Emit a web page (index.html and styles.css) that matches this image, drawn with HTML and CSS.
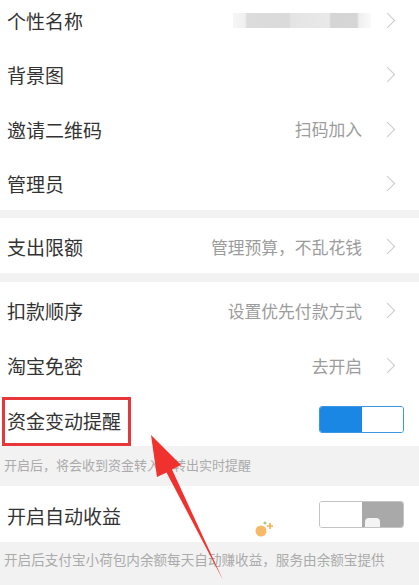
FILE: index.html
```html
<!DOCTYPE html>
<html lang="zh-CN">
  <head>
    <meta charset="UTF-8" />
    <meta name="viewport" content="width=device-width, initial-scale=1.0" />
    <title>小荷包设置</title>
    <link rel="stylesheet" href="styles.css">
  </head>
  <body>
    <div class="page">
      <div class="group group-top">
        <div class="row">
          <span class="label">个性名称</span>
          <span class="blurred"></span>
          <span class="chevron"></span>
        </div>
        <div class="row">
          <span class="label">背景图</span>
          <span class="chevron"></span>
        </div>
        <div class="row">
          <span class="label">邀请二维码</span>
          <span class="value">扫码加入</span>
          <span class="chevron"></span>
        </div>
        <div class="row">
          <span class="label">管理员</span>
          <span class="chevron"></span>
        </div>
      </div>

      <div class="group">
        <div class="row row-tall">
          <span class="label">支出限额</span>
          <span class="value">管理预算，不乱花钱</span>
          <span class="chevron"></span>
        </div>
      </div>

      <div class="group group-last">
        <div class="row row-tall">
          <span class="label">扣款顺序</span>
          <span class="value">设置优先付款方式</span>
          <span class="chevron"></span>
        </div>
        <div class="row row-tall">
          <span class="label">淘宝免密</span>
          <span class="value">去开启</span>
          <span class="chevron"></span>
        </div>
        <div class="row row-tall row-marked">
          <span class="label">资金变动提醒</span>
          <span class="toggle toggle-on">
            <span class="toggle-part"></span>
            <span class="toggle-part"></span>
          </span>
          <span class="highlight"></span>
        </div>
      </div>
      <div class="note">开启后，将会收到资金转入、转出实时提醒</div>

      <div class="group group-last">
        <div class="row row-income">
          <span class="label">开启自动收益</span>
          <span class="toggle toggle-off">
            <span class="toggle-part"></span>
            <span class="toggle-part"><span class="ghost"></span></span>
          </span>
        </div>
      </div>
      <div class="note note-long">开启后支付宝小荷包内余额每天自动赚收益，服务由余额宝提供</div>
    </div>

    <svg class="overlay" width="419" height="585" viewBox="0 0 419 585">
      <polygon fill="#f0322f" points="151,435 181,465 172,469.5 223,580 166.5,472.5 157,477" />
      <circle cx="261" cy="531" r="5.5" fill="#f6b968" />
      <circle cx="265" cy="523" r="1.6" fill="#9fd38c" />
      <path d="M270 523v6M267 526h6" stroke="#f5b04a" stroke-width="1.6" />
    </svg>
  </body>
</html>
```

FILE: styles.css
```css
body {
  margin: 0;
  background-color: #f2f2f2;
  font-family: "Noto Sans CJK SC", "Noto Sans", sans-serif;
  overflow: hidden;
  position: relative;
  width: 419px;
  height: 585px;
}

.page {
  display: flex;
  flex-direction: column;
}

.group {
  background: #fff;
  margin-bottom: 9px;
}

.group-top {
  margin-top: -8px;
  margin-bottom: 8px;
}

.group-last {
  margin-bottom: 0;
}

.row {
  display: flex;
  align-items: center;
  height: 54.5px;
  padding: 0 26px 0 7px;
  position: relative;
}

.row-tall {
  height: 55px;
}

.row-marked {
  height: 54px;
  padding-right: 15px;
}

.row-income {
  height: 56px;
  padding-right: 15px;
}

.label {
  flex: 1;
  font-size: 19px;
  color: #333;
  padding-top: 2px;
}

.value {
  font-size: 16.8px;
  color: #9c9c9c;
  margin-right: 20px;
  padding-top: 2px;
}

.chevron {
  width: 10px;
  height: 10px;
  border-top: 1.3px solid #c9c9c9;
  border-right: 1.3px solid #c9c9c9;
  transform: rotate(45deg);
  margin-top: 2px;
}

.blurred {
  width: 138px;
  height: 15px;
  margin-right: 11px;
  margin-top: 2px;
  background: linear-gradient(90deg,
    #f6f6f6 0, #f0f0f0 12px,
    #dcdcdc 14px, #dadada 56px,
    #e4e4e4 58px, #e9e9e9 96px,
    #d5d5d5 98px, #d6d6d6 124px,
    #efefef 126px, #fafafa 138px);
}

.toggle {
  display: flex;
  width: 85px;
  height: 27px;
  border-radius: 3px;
  overflow: hidden;
  box-sizing: border-box;
}

.toggle-part {
  flex: 1;
  position: relative;
}

.toggle-on {
  border: 1.5px solid #3d95e6;
}

.toggle-on .toggle-part:first-child {
  background: #1b87e5;
}

.toggle-on .toggle-part:last-child {
  background: #fff;
}

.toggle-off {
  border: 1.5px solid #c4c4c4;
}

.toggle-off .toggle-part:first-child {
  background: #fff;
}

.toggle-off .toggle-part:last-child {
  background: #a9a9a9;
}

.ghost {
  position: absolute;
  left: 3px;
  bottom: -3px;
  width: 15px;
  height: 12px;
  border-radius: 4px;
  background: #f4f4f4;
}

.highlight {
  position: absolute;
  left: 2px;
  top: 5px;
  width: 129px;
  height: 49px;
  border: 3px solid #e8373a;
  box-sizing: border-box;
}

.note {
  height: 40px;
  line-height: 38px;
  padding-left: 4px;
  font-size: 13px;
  color: #ababab;
  white-space: nowrap;
}

.note-long {
  font-size: 13.6px;
  line-height: 34px;
}

.overlay {
  position: absolute;
  left: 0;
  top: 0;
}
```
